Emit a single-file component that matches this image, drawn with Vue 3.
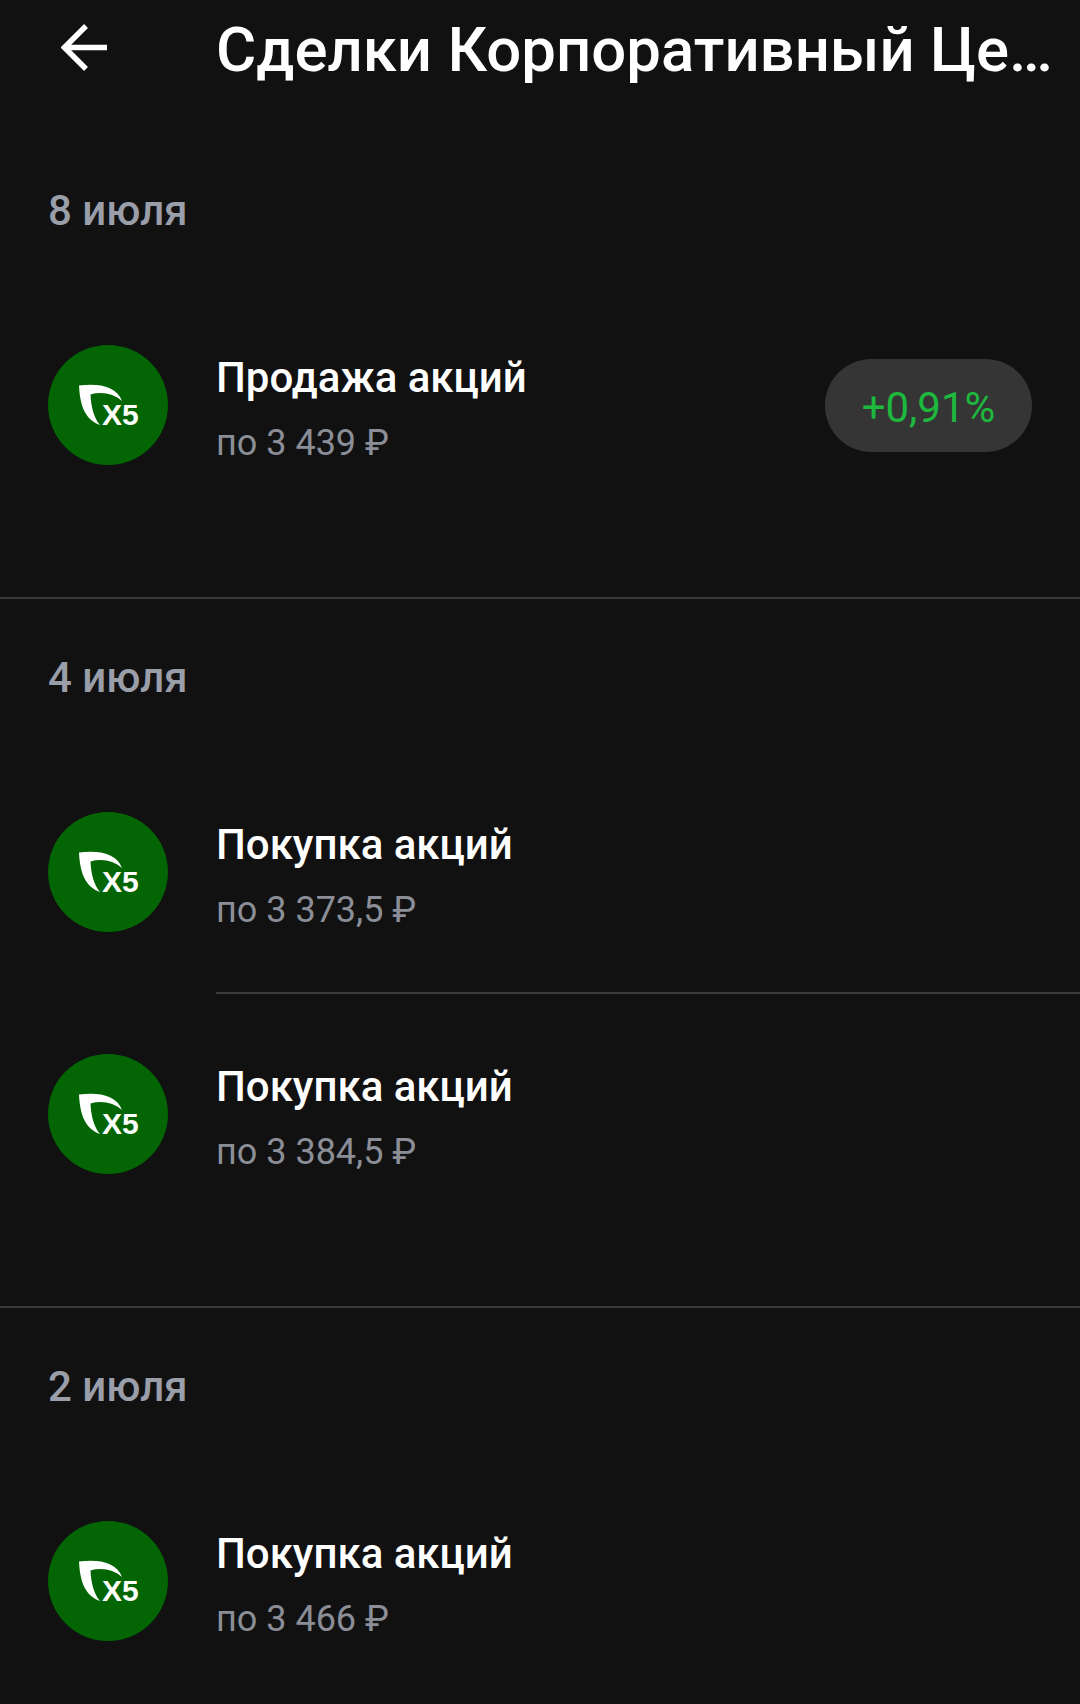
<script setup>
const sections = [
  { date: '8 июля', rows: [{ title: 'Продажа акций', price: 'по 3 439 ₽', badge: '+0,91%' }] },
  { date: '4 июля', rows: [
    { title: 'Покупка акций', price: 'по 3 373,5 ₽' },
    { title: 'Покупка акций', price: 'по 3 384,5 ₽' },
  ] },
  { date: '2 июля', rows: [{ title: 'Покупка акций', price: 'по 3 466 ₽' }] },
]
</script>

<template>
  <div class="page">
    <header class="bar">
      <svg class="back" viewBox="0 0 50 50" width="50" height="50" fill="none" stroke="#fff" stroke-width="5.500">
        <path d="M46 24.500H3M25 3 3.500 24.500 25 46" />
      </svg>
      <h1 class="heading">Сделки Корпоративный Це…</h1>
    </header>
    <section v-for="s in sections" :key="s.date" class="section">
      <h2 class="date">{{ s.date }}</h2>
      <div v-for="(r, i) in s.rows" :key="i" class="row">
        <svg class="logo" viewBox="0 0 120 120" width="120" height="120">
          <circle cx="60" cy="60" r="60" fill="#036503" />
          <path fill="#fff" d="M31 40.500C50 38 69 41 74 56C66 49 54 46 42.500 49.500C43 62 46 73 52 80C38 75 32 62 31 40.500Z" />
          <text x="54" y="80" class="mark">X5</text>
        </svg>
        <div class="text">
          <div class="title">{{ r.title }}</div>
          <div class="price">{{ r.price }}</div>
        </div>
        <div v-if="r.badge" class="badge">{{ r.badge }}</div>
        <div v-if="i < s.rows.length - 1" class="rule"></div>
      </div>
    </section>
  </div>
</template>

<style>
html, body { margin: 0; background: #111112; }
</style>

<style scoped>
.page {
  width: 1080px;
  height: 1704px;
  overflow: hidden;
  background: #111112;
  font-family: Roboto, "Noto Sans", sans-serif;
  color: #fff;
}
.bar {
  height: 100px;
  margin-bottom: 33px;
  display: flex;
  align-items: center;
  padding-left: 61px;
}
.back { flex: none; margin-right: 105px; margin-top: -4px; }
.heading {
  margin: 0;
  font-size: 61.700px;
  line-height: 100px;
  font-weight: 500;
  white-space: nowrap;
}
.section {
  padding: 54px 0 71px;
  border-bottom: 2px solid #3a3a3c;
}
.section:first-of-type { padding-top: 53px; }
.date {
  margin: 0 0 48px;
  padding-left: 48px;
  font-size: 42px;
  line-height: 50px;
  font-weight: 500;
  color: #9a9ea8;
}
.row {
  position: relative;
  height: 242px;
  display: flex;
  align-items: center;
  padding: 0 48px;
}
.logo { flex: none; margin-right: 48px; }
.mark {
  font-family: "Liberation Sans", Arial, sans-serif;
  font-weight: 700;
  font-size: 30px;
  fill: #fff;
}
.text { flex: 1; padding-top: 8px; }
.title {
  font-size: 42px;
  line-height: 50px;
  font-weight: 500;
  margin-bottom: 18px;
}
.price {
  font-size: 36px;
  line-height: 44px;
  color: #8b8e97;
}
.badge {
  width: 207px;
  height: 93px;
  border-radius: 47px;
  background: #353535;
  color: #1db83e;
  font-size: 42px;
  line-height: 97px;
  text-align: center;
}
.rule {
  position: absolute;
  left: 216px;
  right: 0;
  bottom: -1px;
  height: 2px;
  background: #3a3a3c;
}
</style>
